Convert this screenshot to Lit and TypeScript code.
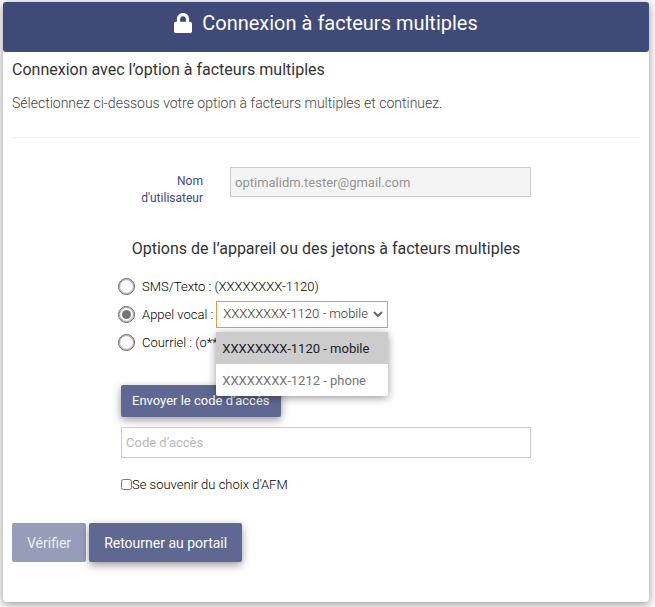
import { LitElement, html, css } from "lit";
import { customElement, state } from "lit/decorators.js";

interface Phone {
  value: string;
  label: string;
}

const PHONES: Phone[] = [
  { value: "1120", label: "XXXXXXXX-1120 - mobile" },
  { value: "1212", label: "XXXXXXXX-1212 - phone" },
];

@customElement("app-root")
export class AppRoot extends LitElement {
  @state() private phone = "1120";
  @state() private menuOpen = true;

  static styles = css`
    :host {
      display: flow-root;
      min-height: 100vh;
      box-sizing: border-box;
      background: #fafafa;
      color: #333;
      font-family: Roboto, "Liberation Sans", sans-serif;
      font-size: 13px;
      line-height: 16px;
    }
    * {
      box-sizing: border-box;
    }
    .card {
      margin: 2px 6px 5px 3px;
      padding-bottom: 40px;
      background: #fff;
      border-radius: 4px;
      box-shadow: 0 2px 8px rgba(0, 0, 0, 0.4);
    }
    .bar {
      display: flex;
      justify-content: center;
      gap: 10px;
      height: 50px;
      padding-top: 9px;
      background: #404a78;
      border-radius: 3px;
      color: #fff;
    }
    .bar h1 {
      margin: 0;
      font-size: 20px;
      line-height: 24px;
      font-weight: 400;
    }
    .lock {
      width: 18px;
      height: 20px;
      margin-top: 2px;
      fill: currentColor;
    }
    .body {
      padding: 0 9px;
    }
    h2 {
      margin: 0;
      font-size: 16px;
      line-height: 20px;
      font-weight: 400;
    }
    .intro {
      padding-top: 8px;
    }
    .lead {
      margin: 0;
      padding: 13px 0 24px;
      font-size: 14px;
      line-height: 20px;
      font-weight: 300;
      color: #444;
      border-bottom: 1px solid #eee;
    }
    .form {
      max-width: 416px;
      margin: 0 auto;
      padding: 29px 3px 0;
    }
    .user {
      display: grid;
      grid-template-columns: 82px 1fr;
      column-gap: 27px;
      align-items: start;
    }
    .user label {
      padding-top: 6px;
      font-size: 12px;
      line-height: 17px;
      text-align: right;
      color: #404a78;
    }
    .field {
      display: block;
      width: 100%;
      height: 30px;
      padding: 0 4px;
      border: 1px solid #ccc;
      border-radius: 0;
      background: #fff;
      font: inherit;
      color: #333;
    }
    .field:disabled {
      background: #f4f4f4;
      color: #959595;
    }
    .field::placeholder {
      color: #b9b9b9;
      opacity: 1;
    }
    .options {
      margin: 0 -3px;
      padding: 0;
      border: 0;
    }
    .options legend {
      width: 100%;
      padding: 32px 0 13px;
      text-align: center;
      font-size: 16px;
      line-height: 20px;
    }
    .row {
      display: flex;
      align-items: center;
      height: 28px;
    }
    .row label {
      padding: 2px 0 0 7px;
      font-weight: 300;
      color: #000;
    }
    .radio {
      appearance: none;
      flex: none;
      display: grid;
      place-items: center;
      width: 17px;
      height: 17px;
      margin: 0;
      border: 1px solid #666;
      border-radius: 50%;
      background: #fff;
      box-shadow: inset 0 0 1px 1px #aaa;
    }
    .radio:checked::before {
      content: "";
      width: 9px;
      height: 9px;
      border-radius: 50%;
      background: #767676;
    }
    .picker {
      position: relative;
      width: 172px;
      margin-left: 3px;
    }
    .select {
      appearance: none;
      display: block;
      width: 100%;
      height: 27px;
      padding: 0 6px;
      border: 1px solid #dfa04c;
      border-radius: 0;
      outline: none;
      background: #fff;
      font: inherit;
      font-weight: 300;
      color: #333;
    }
    .chevron {
      position: absolute;
      top: 10px;
      right: 5px;
      width: 10px;
      height: 7px;
      fill: none;
      stroke: #666;
      stroke-width: 2;
      pointer-events: none;
    }
    .menu {
      position: absolute;
      z-index: 2;
      top: 31px;
      left: 0;
      width: 100%;
      margin: 0;
      padding: 0;
      list-style: none;
      background: #fff;
      border-radius: 2px;
      box-shadow: 0 2px 8px rgba(0, 0, 0, 0.4);
    }
    .item {
      height: 32px;
      padding: 1px 6px 0;
      line-height: 32px;
      white-space: nowrap;
      color: #757575;
    }
    .item.on {
      background: #ccc;
      color: #222;
    }
    .btn {
      padding: 0 15px;
      border: 0;
      border-radius: 2px;
      background: #5e6892;
      color: #fff;
      box-shadow: 0 3px 8px rgba(0, 0, 0, 0.4);
      font: 400 14px/20px Roboto, "Liberation Sans", sans-serif;
      height: 39px;
    }
    .btn:disabled {
      background: #979db8;
      color: #eeeff4;
      box-shadow: none;
    }
    .send {
      display: block;
      height: 32px;
      margin: 29px 0 10px;
      padding: 0 11px;
      font-size: 13px;
    }
    .code {
      height: 31px;
    }
    .remember {
      display: flex;
      align-items: center;
      padding-top: 19px;
    }
    .remember input {
      width: 11px;
      height: 11px;
      margin: 0 0 2px;
    }
    .remember label {
      font-weight: 300;
      color: #000;
    }
    .actions {
      display: flex;
      gap: 3px;
      padding-top: 30px;
    }
  `;

  private pick(value: string) {
    this.phone = value;
    this.menuOpen = false;
  }

  render() {
    return html`
      <main class="card">
        <header class="bar">
          <svg class="lock" viewBox="0 0 448 512" preserveAspectRatio="none" aria-hidden="true">
            <path
              d="M400 224h-24v-72C376 68.200 307.800 0 224 0S72 68.200 72 152v72H48c-26.500 0-48 21.500-48 48v192c0 26.500 21.500 48 48 48h352c26.500 0 48-21.500 48-48V272c0-26.500-21.500-48-48-48zm-104 0H152v-72c0-39.700 32.300-72 72-72s72 32.300 72 72v72z"
            />
          </svg>
          <h1>Connexion à facteurs multiples</h1>
        </header>
        <div class="body">
          <h2 class="intro">Connexion avec l’option à facteurs multiples</h2>
          <p class="lead">Sélectionnez ci-dessous votre option à facteurs multiples et continuez.</p>
          <div class="form">
            <div class="user">
              <label for="user">Nom d'utilisateur</label>
              <input class="field" id="user" type="text" value="optimalidm.tester@gmail.com" disabled />
            </div>
            <fieldset class="options">
              <legend>Options de l’appareil ou des jetons à facteurs multiples</legend>
              <div class="row">
                <input class="radio" type="radio" name="device" id="sms" />
                <label for="sms">SMS/Texto : (XXXXXXXX-1120)</label>
              </div>
              <div class="row">
                <input class="radio" type="radio" name="device" id="voice" checked />
                <label for="voice">Appel vocal :</label>
                <div class="picker">
                  <select
                    class="select"
                    aria-label="Appel vocal"
                    .value=${this.phone}
                    @change=${(e: Event) => this.pick((e.target as HTMLSelectElement).value)}
                  >
                    ${PHONES.map((p) => html`<option value=${p.value}>${p.label}</option>`)}
                  </select>
                  <svg class="chevron" viewBox="0 0 10 7" aria-hidden="true"><path d="M1 1l4 4 4-4" /></svg>
                  ${this.menuOpen
                    ? html`<ul class="menu" role="listbox" aria-label="Appel vocal">
                        ${PHONES.map(
                          (p) => html`<li
                            class="item ${p.value === this.phone ? "on" : ""}"
                            role="option"
                            aria-selected=${p.value === this.phone}
                            @click=${() => this.pick(p.value)}
                          >
                            ${p.label}
                          </li>`
                        )}
                      </ul>`
                    : ""}
                </div>
              </div>
              <div class="row">
                <input class="radio" type="radio" name="device" id="mail" />
                <label for="mail">Courriel : (o**</label>
              </div>
            </fieldset>
            <button class="btn send" type="button">Envoyer le code d’accès</button>
            <input class="field code" type="text" placeholder="Code d’accès" aria-label="Code d’accès" />
            <div class="remember">
              <input type="checkbox" id="remember" />
              <label for="remember">Se souvenir du choix d’AFM</label>
            </div>
          </div>
          <div class="actions">
            <button class="btn" type="button" disabled>Vérifier</button>
            <button class="btn" type="button">Retourner au portail</button>
          </div>
        </div>
      </main>
    `;
  }
}
